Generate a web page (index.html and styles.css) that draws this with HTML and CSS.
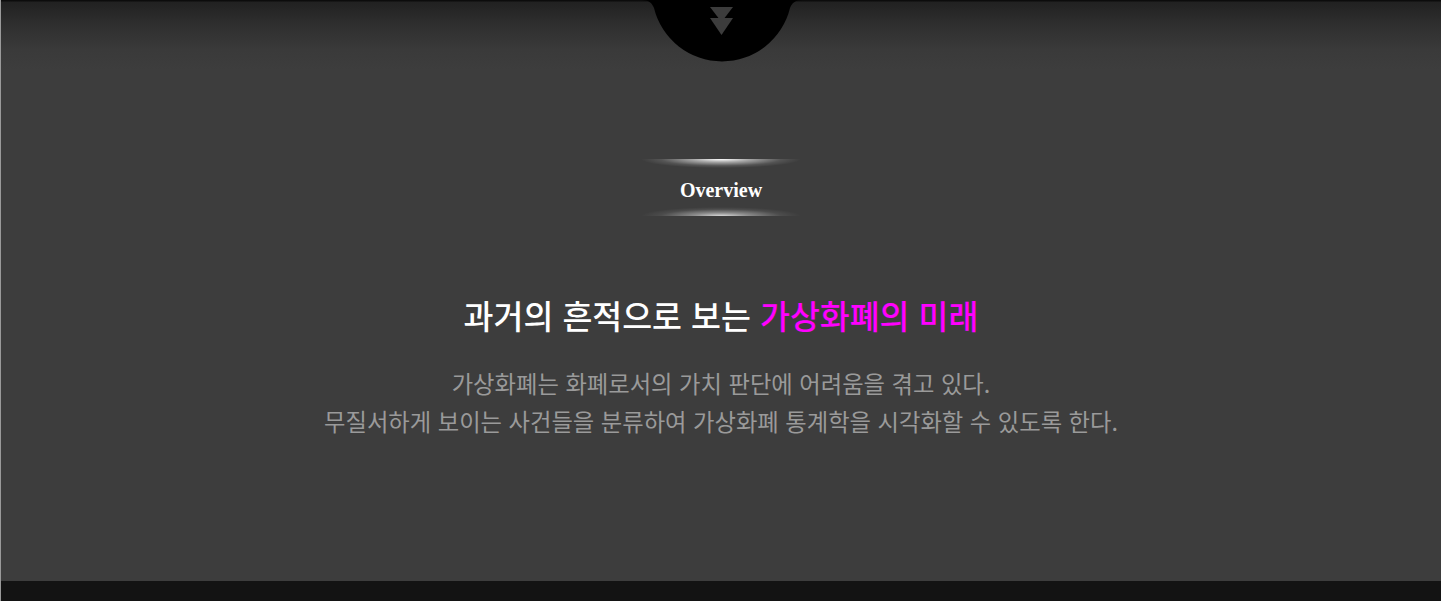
FILE: index.html
```html
<!DOCTYPE html>
<html lang="ko">
<head>
<meta charset="utf-8">
<title>Overview</title>
<link rel="stylesheet" href="styles.css">
</head>
<body>
<div class="page">
  <section class="intro">
    <svg class="notch" width="160" height="62" viewBox="0 0 160 62" aria-hidden="true">
      <path d="M0 0 C7 0 10 3 12 8 A70 70 0 0 0 148 8 C150 3 153 0 160 0 Z" fill="#000"/>
      <path d="M68 7 L91 7 L79.5 22 Z" fill="#3c3c3c"/>
      <path d="M68 18 L91 18 L79.5 35 Z" fill="#3c3c3c"/>
    </svg>
    <div class="badge">
      <div class="glow glow-top"></div>
      <div class="badge-label">Overview</div>
      <div class="glow glow-bottom"></div>
    </div>
    <h2 class="title">과거의 흔적으로 보는 <span class="accent">가상화폐의 미래</span></h2>
    <p class="desc">가상화폐는 화폐로서의 가치 판단에 어려움을 겪고 있다.<br>무질서하게 보이는 사건들을 분류하여 가상화폐 통계학을 시각화할 수 있도록 한다.</p>
  </section>
  <footer class="footer"></footer>
</div>
</body>
</html>
```

FILE: styles.css
```css
html, body {
  margin: 0;
  padding: 0;
  background: #3d3d3d;
}
.page {
  border-left: 1px solid #9a9a9a;
  min-height: 601px;
  display: flex;
  flex-direction: column;
  font-family: "Noto Sans CJK KR", "Noto Sans", sans-serif;
}
.intro {
  position: relative;
  height: 581px;
  box-sizing: border-box;
  padding-top: 159px;
  display: flex;
  flex-direction: column;
  align-items: center;
  background: linear-gradient(to bottom, #0c0c0c 0, #0c0c0c 1px, #212121 2px, #2f2f2f 25px, #3a3a3a 50px, #3d3d3d 70px, #3d3d3d 100%);
}
.notch {
  position: absolute;
  top: 0;
  left: 641px;
  display: block;
}
.badge {
  width: 160px;
  display: flex;
  flex-direction: column;
  align-items: center;
}
.glow {
  width: 160px;
  height: 9px;
}
.glow-top {
  background: radial-gradient(ellipse 50% 100% at 50% 0%, rgba(255,255,255,1) 0%, rgba(255,255,255,0.55) 35%, rgba(255,255,255,0.12) 75%, rgba(255,255,255,0) 100%);
}
.glow-bottom {
  background: radial-gradient(ellipse 50% 100% at 50% 100%, rgba(255,255,255,0.8) 0%, rgba(255,255,255,0.4) 35%, rgba(255,255,255,0.08) 75%, rgba(255,255,255,0) 100%);
}
.badge-label {
  font-family: "Liberation Serif", "DejaVu Serif", serif;
  font-weight: bold;
  font-size: 20px;
  line-height: 33px;
  padding-top: 6px;
  color: #ffffff;
}
.title {
  margin: 79px 0 0;
  font-size: 32.5px;
  line-height: 40px;
  font-weight: 500;
  color: #ffffff;
  text-align: center;
}
.accent {
  color: #ff00ff;
}
.desc {
  margin: 29px 0 0;
  font-size: 23.3px;
  line-height: 38px;
  font-weight: 400;
  color: #9a9a9a;
  text-align: center;
}
.footer {
  height: 20px;
  background: #131313;
}
```
